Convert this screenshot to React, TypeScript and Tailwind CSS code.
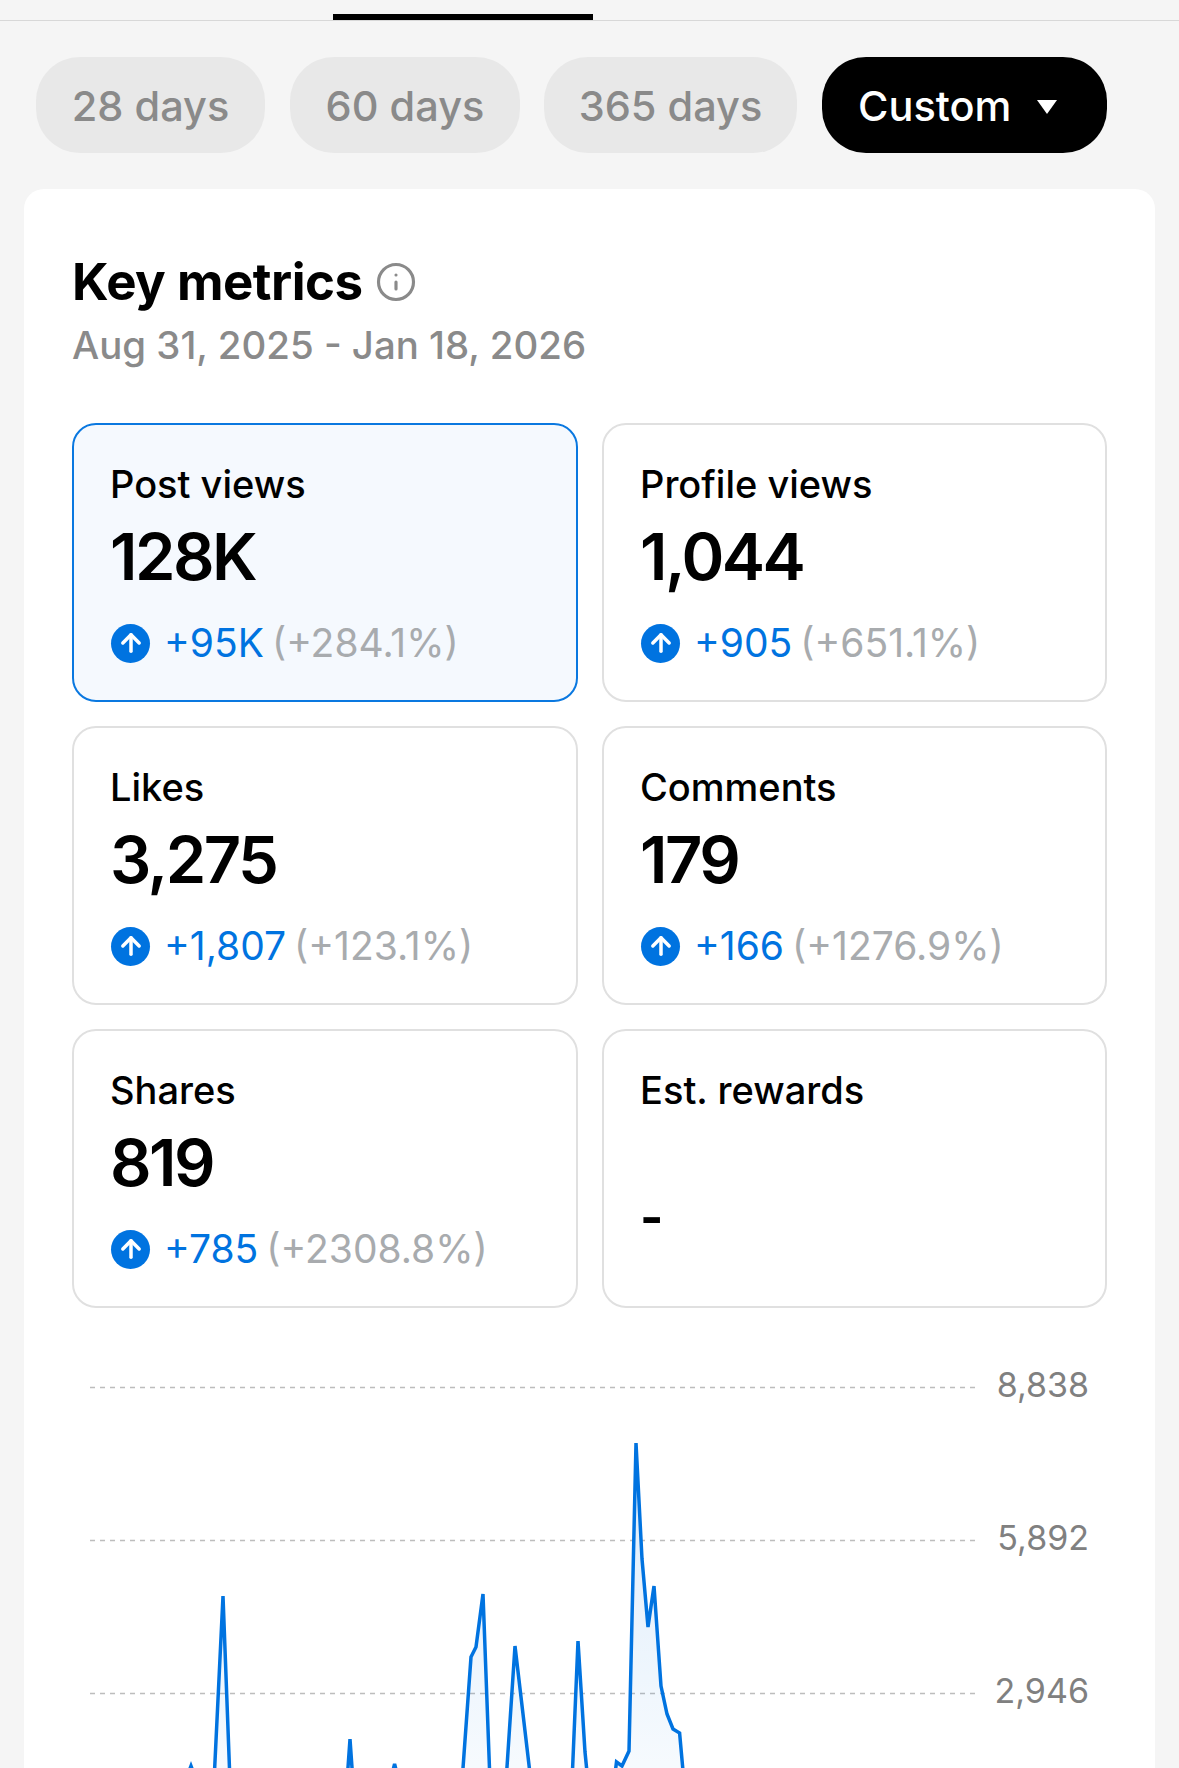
import React from 'react';
import { ArrowUp, Info } from 'lucide-react';

interface Metric {
  label: string;
  value: string;
  delta?: string;
  percent?: string;
}

const metrics: Metric[] = [
  { label: 'Post views', value: '128K', delta: '+95K', percent: '(+284.1%)' },
  { label: 'Profile views', value: '1,044', delta: '+905', percent: '(+651.1%)' },
  { label: 'Likes', value: '3,275', delta: '+1,807', percent: '(+123.1%)' },
  { label: 'Comments', value: '179', delta: '+166', percent: '(+1276.9%)' },
  { label: 'Shares', value: '819', delta: '+785', percent: '(+2308.8%)' },
  { label: 'Est. rewards', value: '-' },
];

// chart coordinates, origin at the left of the plot and the first grid line
const points: [number, number][] = [
  [0, 395], [95, 395], [101, 379], [107, 395], [124, 395], [133, 209], [140, 395],
  [257, 395], [260, 352], [263, 395], [300, 395], [304.6, 377], [309, 395], [372, 395],
  [381, 270], [386, 260], [393, 207], [400, 395], [416, 395], [425, 259], [441, 395],
  [482, 395], [488, 254], [495, 365], [498, 395], [524, 395], [526.5, 375], [532, 379],
  [539, 364], [546, 56], [552, 172], [558, 240], [564, 199], [571, 299], [577, 327],
  [583, 342], [589.6, 346], [594, 395],
];

const linePoints = points.map(([x, y]) => `${x},${y}`).join(' ');
const areaPoints = `0,395 ${linePoints} 594,395`;

const MetricCard: React.FC<{ metric: Metric; active?: boolean }> = ({ metric, active }) => (
  <div
    className={`h-[279px] rounded-[24px] border-2 pl-[36px] ${
      active ? 'border-[#0a78e0] bg-[#f5f9fe]' : 'border-[#e0e0e0] bg-white'
    }`}
  >
    <div className="mt-[36px] text-[38px] leading-[46px] font-medium text-black">{metric.label}</div>
    {metric.delta ? (
      <>
        <div className="mt-[11px] text-[65px] leading-[78px] font-semibold tracking-[-2.5px] text-black">{metric.value}</div>
        <div className="mt-[24px] flex items-center text-[39px] leading-[46px]">
          <span className="ml-[1px] flex h-[39px] w-[39px] items-center justify-center rounded-full bg-[#0073e0]">
            <ArrowUp size={28} strokeWidth={3} className="text-white" />
          </span>
          <span className="ml-[14px] text-[#0073e0]">{metric.delta}</span>
          <span className="ml-[8px] text-[#a8abae]">{metric.percent}</span>
        </div>
      </>
    ) : (
      <div className="mt-[74px] text-[50px] leading-[60px] font-bold text-black">{metric.value}</div>
    )}
  </div>
);

const App: React.FC = () => {
  return (
    <div className="h-[1768px] w-[1179px] overflow-hidden bg-[#f5f5f5] font-['Inter',sans-serif]">
      {/* Tab bar */}
      <div className="h-[21px] border-b border-[#d8d8d8] pl-[333px] pt-[14px]">
        <div className="h-[6px] w-[260px] bg-black" />
      </div>

      {/* Range pills */}
      <div className="mt-[36px] flex pl-[36px] text-[41.5px] font-medium">
        <button className="h-[96px] w-[229px] rounded-[44px] bg-[#e8e8e8] pt-[2px] text-[#8a8a8a]">28 days</button>
        <button className="ml-[25px] h-[96px] w-[230px] rounded-[44px] bg-[#e8e8e8] pt-[2px] text-[#8a8a8a]">60 days</button>
        <button className="ml-[24px] h-[96px] w-[253px] rounded-[44px] bg-[#e8e8e8] pt-[2px] text-[#8a8a8a]">365 days</button>
        <button className="ml-[25px] flex h-[96px] w-[285px] items-center rounded-[44px] bg-black pl-[36px] pt-[2px] text-white">
          Custom
          <svg width="20" height="14" viewBox="0 0 20 14" className="ml-[26px] mt-[1px]">
            <path d="M0 0h20L10 14z" fill="white" />
          </svg>
        </button>
      </div>

      {/* Card */}
      <div className="mx-[24px] mt-[36px] h-[1600px] rounded-[20px] bg-white pl-[48px] pr-[48px] pt-[65px]">
        <div className="flex h-[56px] items-center">
          <h2 className="text-[51px] leading-[56px] font-bold tracking-[-0.5px] text-black">Key metrics</h2>
          <Info size={42} strokeWidth={1.8} className="ml-[12px] text-[#8a8a8a]" />
        </div>
        <div className="mt-[12px] text-[38.4px] leading-[46px] font-medium text-[#8a8a8a]">Aug 31, 2025 - Jan 18, 2026</div>

        <div className="mt-[55px] grid grid-cols-[506px_505px] gap-x-[24px] gap-y-[24px]">
          {metrics.map((m, i) => (
            <MetricCard key={m.label} metric={m} active={i === 0} />
          ))}
        </div>

        {/* Chart */}
        <div className="mt-[79px] flex">
          <svg width="885" height="380" className="ml-[18px] shrink-0 overflow-visible">
            <defs>
              <linearGradient id="area" x1="0" y1="56" x2="0" y2="395" gradientUnits="userSpaceOnUse">
                <stop offset="0" stopColor="#0073e0" stopOpacity="0.14" />
                <stop offset="1" stopColor="#0073e0" stopOpacity="0.03" />
              </linearGradient>
            </defs>
            {[0, 153, 306].map((y) => (
              <line key={y} x1="0" x2="885" y1={y + 0.5} y2={y + 0.5} stroke="#bdbdbd" strokeWidth="1.5" strokeDasharray="5 5" />
            ))}
            <polygon points={areaPoints} fill="url(#area)" />
            <polyline points={linePoints} fill="none" stroke="#0073e0" strokeWidth="3.5" strokeLinejoin="miter" />
          </svg>
          <div className="flex w-[114px] flex-col items-end text-[34px] leading-[40px] text-[#808080]">
            <div className="-mt-[22px]">8,838</div>
            <div className="mt-[113px]">5,892</div>
            <div className="mt-[113px]">2,946</div>
          </div>
        </div>
      </div>
    </div>
  );
};

export default App;
